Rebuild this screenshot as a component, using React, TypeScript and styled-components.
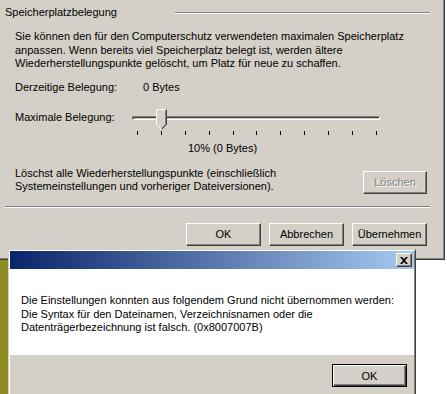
import React from "react";
import styled, { createGlobalStyle } from "styled-components";

const GlobalStyle = createGlobalStyle`
  html, body { margin: 0; padding: 0; background: #ffffff; }
  body {
    font-family: "Liberation Sans", Arial, sans-serif;
    font-size: 11px;
    color: #000;
  }
`;

const Desktop = styled.div`
  position: relative;
  width: 447px;
  height: 394px;
  overflow: hidden;
  background: linear-gradient(to right, #8e8c22 0 8px, #ffffff 8px);
`;

const MainWindow = styled.div`
  position: absolute;
  left: 0;
  top: 0;
  width: 445px;
  height: 260px;
  box-sizing: border-box;
  background: #d4d0c8;
  border-right: 1px solid #404040;
  border-bottom: 1px solid #404040;
  box-shadow: inset -1px -1px 0 #808080;
  display: flex;
  flex-direction: column;
  padding: 6px 14px 0 5px;
`;

const GroupHeader = styled.div`
  display: flex;
  align-items: center;
  height: 13px;
  line-height: 13px;
`;

const EtchedLine = styled.div<{ $width?: number }>`
  height: 1px;
  border-top: 1px solid #808080;
  background: #ffffff;
  width: ${(p) => (p.$width ? `${p.$width}px` : "auto")};
  margin-left: auto;
  align-self: ${(p) => (p.$width ? "center" : "stretch")};
`;

const Section = styled.div`
  display: flex;
  flex-direction: column;
  padding-left: 10px;
`;

const Paragraph = styled.div<{ $mt: number }>`
  line-height: 13.5px;
  margin-top: ${(p) => p.$mt}px;
`;

const InfoRow = styled.div<{ $mt: number }>`
  display: flex;
  align-items: flex-start;
  line-height: 13px;
  margin-top: ${(p) => p.$mt}px;
`;

const RowLabel = styled.div<{ $w: number; $mt?: number }>`
  width: ${(p) => p.$w}px;
  flex: none;
  margin-top: ${(p) => p.$mt ?? 0}px;
`;

const SliderBox = styled.div`
  position: relative;
  width: 248px;
  height: 26px;
  display: flex;
  flex-direction: column;
`;

const Channel = styled.div`
  margin-top: 7px;
  height: 4px;
  box-sizing: border-box;
  border: 1px solid;
  border-color: #808080 #ffffff #ffffff #808080;
  box-shadow: inset 1px 1px 0 #404040;
`;

const Ticks = styled.div`
  margin-top: 11px;
  padding: 0 3px 0 5px;
  display: flex;
  justify-content: space-between;
`;

const Tick = styled.div`
  width: 1px;
  height: 4px;
  background: #000;
`;

const Thumb = styled.svg`
  position: absolute;
  top: 0;
  width: 11px;
  height: 21px;
`;

const Percent = styled.div`
  margin-top: 7px;
  margin-left: 173px;
  line-height: 13px;
`;

const DeleteRow = styled.div`
  display: flex;
  align-items: flex-start;
  justify-content: space-between;
  margin-top: 12px;
  margin-right: 3px;
`;

const DeleteText = styled.div`
  line-height: 13.5px;
`;

const Button = styled.button<{ $w?: number; $disabled?: boolean; $default?: boolean }>`
  width: ${(p) => p.$w ?? 75}px;
  height: 23px;
  box-sizing: border-box;
  padding: 0;
  margin: 0;
  font-family: "Liberation Sans", Arial, sans-serif;
  font-size: 11px;
  background: #d4d0c8;
  color: ${(p) => (p.$disabled ? "#808080" : "#000")};
  text-shadow: ${(p) => (p.$disabled ? "1px 1px 0 #ffffff" : "none")};
  border: 1px solid;
  border-color: ${(p) =>
    p.$default ? "#000" : "#ffffff #404040 #404040 #ffffff"};
  box-shadow: ${(p) =>
    p.$default
      ? "inset 1px 1px 0 #ffffff, inset -1px -1px 0 #404040, inset -2px -2px 0 #808080"
      : "inset -1px -1px 0 #808080, inset 1px 1px 0 #d4d0c8"};
  flex: none;
`;

const DeleteButton = styled(Button)`
  margin-top: 4px;
`;

const ButtonBar = styled.div<{ $mt: number; $mr: number }>`
  display: flex;
  justify-content: flex-end;
  gap: 8px;
  margin-top: ${(p) => p.$mt}px;
  margin-right: ${(p) => p.$mr}px;
`;

const BottomLine = styled(EtchedLine)`
  margin-top: 12px;
  margin-left: 0;
`;

/* Error dialog */
const ErrorWindow = styled.div`
  position: absolute;
  left: 8px;
  top: 249px;
  width: 408px;
  height: 170px;
  box-sizing: border-box;
  background: #d4d0c8;
  border: 1px solid;
  border-color: #d4d0c8 #404040 #404040 #d4d0c8;
  box-shadow: inset 1px 1px 0 #ffffff, inset -1px -1px 0 #808080;
  padding: 1px;
  display: flex;
  flex-direction: column;
`;

const TitleBar = styled.div`
  height: 18px;
  background: linear-gradient(to right, #0a246a, #a6caf0);
  display: flex;
  justify-content: flex-end;
  align-items: flex-start;
  padding: 2px 2px 0 0;
  box-sizing: border-box;
`;

const CloseButton = styled.div`
  width: 16px;
  height: 14px;
  box-sizing: border-box;
  background: #d4d0c8;
  border: 1px solid;
  border-color: #ffffff #404040 #404040 #ffffff;
  box-shadow: inset -1px -1px 0 #808080;
  display: flex;
  align-items: center;
  justify-content: center;
`;

const MessageBody = styled.div`
  background: #ffffff;
  height: 86px;
  box-sizing: border-box;
  padding: 25px 11px 0 11px;
  line-height: 13.5px;
`;

const MessageFooter = styled.div`
  display: flex;
  justify-content: flex-end;
  padding: 9px 7px 0 0;
`;

const ticks = Array.from({ length: 11 });
const value = 10;

export default function App() {
  const thumbLeft = 5 + (value / 100) * 239 - 5;
  return (
    <>
      <GlobalStyle />
      <Desktop>
        <MainWindow>
          <GroupHeader>
            <span>Speicherplatzbelegung</span>
            <EtchedLine $width={255} />
          </GroupHeader>
          <Section>
            <Paragraph $mt={11}>
              Sie können den für den Computerschutz verwendeten maximalen Speicherplatz
              <br />
              anpassen. Wenn bereits viel Speicherplatz belegt ist, werden ältere
              <br />
              Wiederherstellungspunkte gelöscht, um Platz für neue zu schaffen.
            </Paragraph>
            <InfoRow $mt={10}>
              <RowLabel $w={128}>Derzeitige Belegung:</RowLabel>
              <span>0 Bytes</span>
            </InfoRow>
            <InfoRow $mt={15}>
              <RowLabel $w={117} $mt={2}>
                Maximale Belegung:
              </RowLabel>
              <SliderBox>
                <Channel />
                <Ticks>
                  {ticks.map((_, i) => (
                    <Tick key={i} />
                  ))}
                </Ticks>
                <Thumb viewBox="0 0 11 21" style={{ left: thumbLeft }}>
                  <path d="M0.5 0.5 H10.5 V15.5 L5.5 20.5 L0.5 15.5 Z" fill="#d4d0c8" />
                  <path d="M0.5 15.5 V0.5 H9.5" stroke="#ffffff" fill="none" />
                  <path d="M10.5 0.5 V15.5 L5.5 20.5" stroke="#404040" fill="none" />
                  <path d="M9.5 1.5 V15.5 L5.5 19.5" stroke="#808080" fill="none" />
                  <path d="M0.5 15.5 L5.5 20.5" stroke="#ffffff" fill="none" />
                </Thumb>
              </SliderBox>
            </InfoRow>
            <Percent>10% (0 Bytes)</Percent>
            <DeleteRow>
              <DeleteText>
                Löschst alle Wiederherstellungspunkte (einschließlich
                <br />
                Systemeinstellungen und vorheriger Dateiversionen).
              </DeleteText>
              <DeleteButton $w={64} $disabled disabled>
                Löschen
              </DeleteButton>
            </DeleteRow>
          </Section>
          <BottomLine />
          <ButtonBar $mt={15} $mr={3}>
            <Button>OK</Button>
            <Button>Abbrechen</Button>
            <Button>Übernehmen</Button>
          </ButtonBar>
        </MainWindow>

        <ErrorWindow>
          <TitleBar>
            <CloseButton>
              <svg width="8" height="7" viewBox="0 0 8 7">
                <path d="M0 0 L2 0 L4 2 L6 0 L8 0 L5 3.5 L8 7 L6 7 L4 5 L2 7 L0 7 L3 3.5 Z" fill="#000" />
              </svg>
            </CloseButton>
          </TitleBar>
          <MessageBody>
            Die Einstellungen konnten aus folgendem Grund nicht übernommen werden:
            <br />
            Die Syntax für den Dateinamen, Verzeichnisnamen oder die
            <br />
            Datenträgerbezeichnung ist falsch. (0x8007007B)
          </MessageBody>
          <MessageFooter>
            <Button $default>OK</Button>
          </MessageFooter>
        </ErrorWindow>
      </Desktop>
    </>
  );
}
